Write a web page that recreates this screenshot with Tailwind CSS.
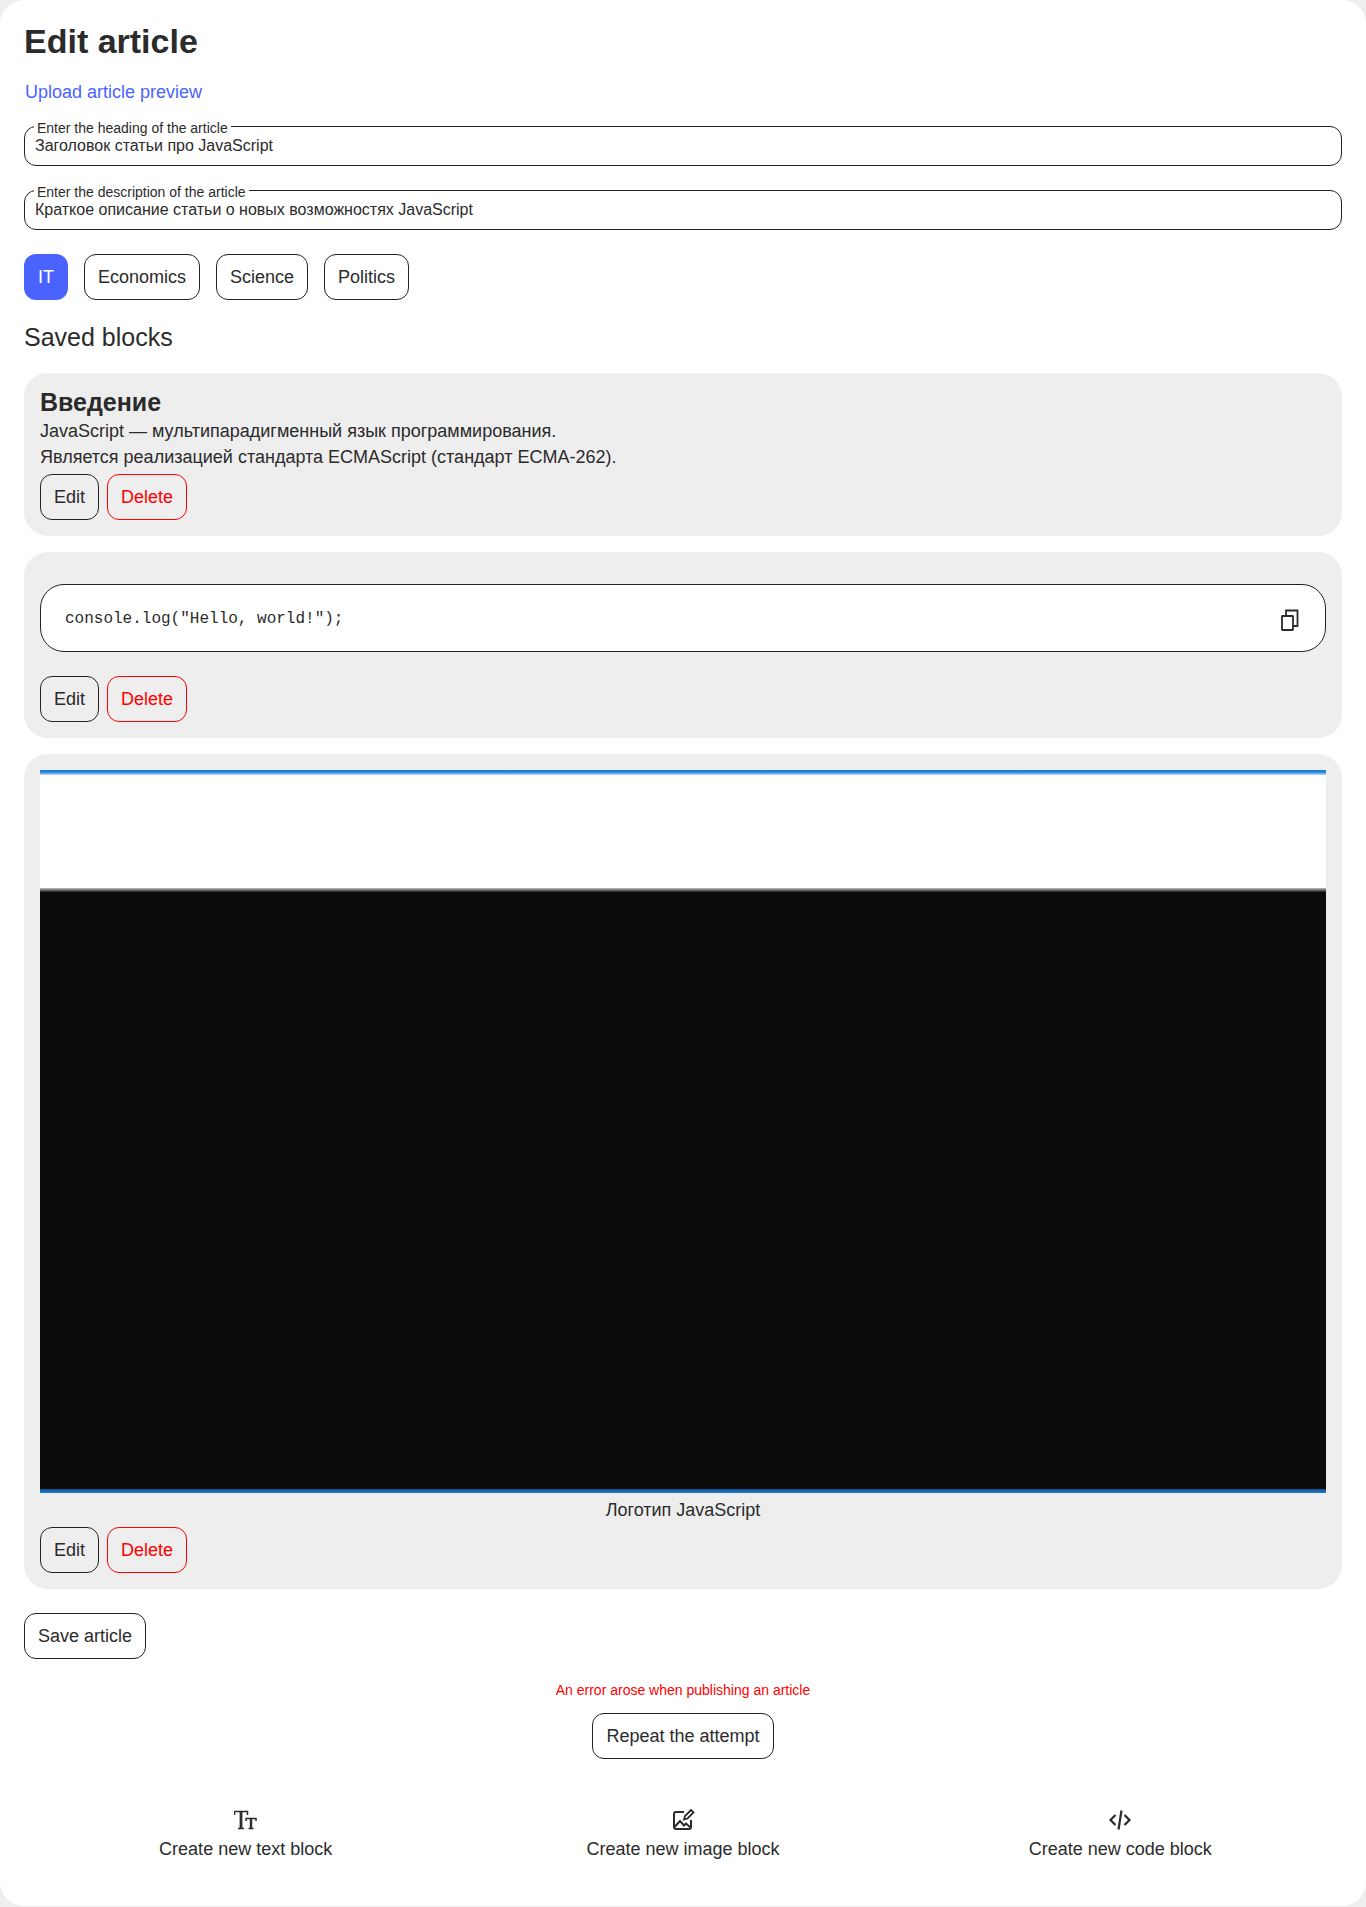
<!DOCTYPE html>
<html lang="en">
<head>
    <meta charset="UTF-8">
    <meta name="viewport" content="width=device-width, initial-scale=1.0">
    <title>Edit article</title>
    <script src="https://cdn.jsdelivr.net/npm/@tailwindcss/browser@4"></script>
</head>
<body class="bg-[#eeeeee] font-['Liberation_Sans',sans-serif] text-[#2b2b2b]">
    <main class="h-[1906px] bg-white rounded-[24px] px-6 pt-6">
        <h1 class="text-[34px] leading-[34px] font-bold">Edit article</h1>
        <button class="block mt-[22px] ml-px text-[18px] leading-[24px] text-[#4a63ff]">Upload article preview</button>

        <fieldset class="mt-[13px] h-[49px] border border-[#222222] rounded-[12px] px-[10px]">
            <legend class="-ml-[1px] px-[3px] pt-1 text-[14px] leading-[14px]">Enter the heading of the article</legend>
            <input class="w-full mt-[2px] text-[16px] leading-[18px] outline-none text-[#2b2b2b] block" value="Заголовок статьи про JavaScript">
        </fieldset>
        <fieldset class="mt-[15px] h-[49px] border border-[#222222] rounded-[12px] px-[10px]">
            <legend class="-ml-[1px] px-[3px] pt-1 text-[14px] leading-[14px]">Enter the description of the article</legend>
            <input class="w-full mt-[2px] text-[16px] leading-[18px] outline-none text-[#2b2b2b] block" value="Краткое описание статьи о новых возможностях JavaScript">
        </fieldset>

        <!-- categories -->
        <div class="flex gap-4 mt-6 text-[18px]">
            <button class="h-[46px] px-[14px] rounded-[12px] bg-[#4a63ff] text-white">IT</button>
            <button class="h-[46px] px-[13px] rounded-[12px] border border-[#222222]">Economics</button>
            <button class="h-[46px] px-[13px] rounded-[12px] border border-[#222222]">Science</button>
            <button class="h-[46px] px-[13px] rounded-[12px] border border-[#222222]">Politics</button>
        </div>

        <h2 class="mt-[22px] text-[25px] leading-[30px]">Saved blocks</h2>

        <!-- text block -->
        <section class="mt-[21px] bg-[#eeeeee] rounded-[24px] p-4 h-[163px]">
            <h3 class="text-[25px] leading-[28px] font-bold -mt-px">Введение</h3>
            <p class="text-[18px] leading-[26px] mt-[2px]">JavaScript — мультипарадигменный язык программирования.<br>Является реализацией стандарта ECMAScript (стандарт ECMA-262).</p>
            <div class="flex gap-2 mt-1 text-[18px]">
                <button class="h-[46px] px-[13px] rounded-[12px] border border-[#222222]">Edit</button>
                <button class="h-[46px] px-[13px] rounded-[12px] border border-[#ff0000] text-[#ff0000]">Delete</button>
            </div>
        </section>

        <!-- code block -->
        <section class="mt-4 bg-[#eeeeee] rounded-[24px] px-4 pt-8 pb-4 h-[186px]">
            <div class="h-[68px] bg-white border border-[#222222] rounded-[24px] pl-6 pr-[23px] flex justify-between items-center">
                <code class="font-['Liberation_Mono',monospace] text-[16px] mt-[2px]">console.log("Hello, world!");</code>
                <svg class="w-6 h-6 mt-[5px]" viewBox="0 0 24 24" fill="none" stroke="#2b2b2b" stroke-width="1.800">
                    <path d="M8 7V1.500h11.500V17H15"/>
                    <rect x="4" y="7" width="11" height="14" rx="0.500"/>
                </svg>
            </div>
            <div class="flex gap-2 mt-6 text-[18px]">
                <button class="h-[46px] px-[13px] rounded-[12px] border border-[#222222]">Edit</button>
                <button class="h-[46px] px-[13px] rounded-[12px] border border-[#ff0000] text-[#ff0000]">Delete</button>
            </div>
        </section>

        <!-- image block -->
        <section class="mt-4 bg-[#eeeeee] rounded-[24px] p-4 h-[835px]">
            <div class="h-[723px] flex flex-col">
                <div class="h-[5px] bg-gradient-to-b from-[#1a7fd8] from-40% to-[#bcdcf5]"></div>
                <div class="h-[113px] bg-white"></div>
                <div class="h-[4px] bg-gradient-to-b from-[#c4c4c4] to-[#222222]"></div>
                <div class="h-[597px] bg-[#0b0b0b]"></div>
                <div class="h-[4px] bg-gradient-to-b from-[#0f4f87] to-[#1a7fd8]"></div>
            </div>
            <p class="text-center text-[18px] leading-[24px] mt-[5px]">Логотип JavaScript</p>
            <div class="flex gap-2 mt-[5px] text-[18px]">
                <button class="h-[46px] px-[13px] rounded-[12px] border border-[#222222]">Edit</button>
                <button class="h-[46px] px-[13px] rounded-[12px] border border-[#ff0000] text-[#ff0000]">Delete</button>
            </div>
        </section>

        <button class="block mt-6 h-[46px] px-[13px] rounded-[12px] border border-[#222222] text-[18px]">Save article</button>

        <p class="mt-[23px] text-center text-[14px] leading-4 text-[#ff0000]">An error arose when publishing an article</p>
        <button class="block mx-auto mt-[15px] h-[46px] px-[13px] rounded-[12px] border border-[#222222] text-[18px]">Repeat the attempt</button>

        <!-- create block actions -->
        <div class="grid grid-cols-3 mt-[49px] px-[3px] text-[18px]">
            <button class="flex flex-col items-center">
                <svg class="w-6 h-6" viewBox="0 0 24 24" fill="none" stroke="#2b2b2b" stroke-width="1.500">
                    <path d="M0.500 7V3.500h13V7"/>
                    <path d="M7 3.500V20" stroke-width="2.800"/>
                    <path d="M4 20.500h6"/>
                    <path d="M12 13v-2.500h10V13M14.500 20.500h5"/>
                    <path d="M17 10.500V20" stroke-width="2.400"/>
                </svg>
                <span class="leading-[24px] mt-[5px]">Create new text block</span>
            </button>
            <button class="flex flex-col items-center">
                <svg class="w-6 h-6" viewBox="0 0 24 24" fill="none" stroke="#2b2b2b" stroke-width="2">
                    <path d="M13 4H5a2 2 0 0 0-2 2v13a2 2 0 0 0 2 2h13a2 2 0 0 0 2-2v-7"/>
                    <path d="M3.500 19l5.500-6 4 4.500 2-2 4.500 4"/>
                    <path d="M13 11.500l1-3.500 6-6 2.500 2.500-6 6z" stroke-width="1.800"/>
                </svg>
                <span class="leading-[24px] mt-[5px]">Create new image block</span>
            </button>
            <button class="flex flex-col items-center">
                <svg class="w-6 h-6" viewBox="0 0 24 24" fill="none" stroke="#2b2b2b" stroke-width="2.200">
                    <path d="M7.500 7l-5 5 5 5M16.500 7l5 5-5 5M13.500 2.500l-3 19"/>
                </svg>
                <span class="leading-[24px] mt-[5px]">Create new code block</span>
            </button>
        </div>
    </main>
</body>
</html>
